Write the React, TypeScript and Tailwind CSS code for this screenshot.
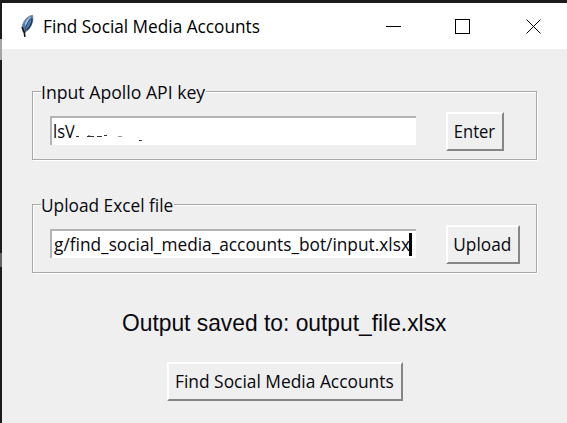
import React from "react";

const uiFont = "font-['Open_Sans','Noto_Sans',sans-serif]";

function Feather() {
  return (
    <svg className="h-6 w-4 shrink-0" viewBox="0 0 16 24" fill="none">
      <path d="M5.700 18.500C3.500 16 3.700 11 6.700 6.500C8.700 3.600 11.500 1.500 14.600 1.400C15.400 5.500 14.200 11 11 15C9.600 16.700 7.700 18 5.700 18.500Z" fill="#4a7ab6" stroke="#78838c" strokeWidth="1" />
      <path d="M7 9C8.500 5.500 11 2.800 13.100 2.600C12 5.500 9.800 8.500 7.200 12.500Z" fill="#9fbfe2" />
      <path d="M14.100 4.500C14.100 9 12.300 12.700 9 15.800" stroke="#243447" strokeWidth="1.300" />
      <path d="M12.300 4.500C9.600 8.500 7.300 13 6.800 19" stroke="#2b3b4f" strokeWidth="0.800" />
      <path d="M4.100 13L6.300 18.500L6.900 22.800" stroke="#161616" strokeWidth="1.600" />
    </svg>
  );
}

function TitleBar() {
  return (
    <header className="flex h-[46px] shrink-0 items-center bg-white pl-4 text-black">
      <Feather />
      <h1 className="ml-[9px] grow whitespace-nowrap text-[18px] leading-6">
        <span className="inline-block origin-left scale-x-[0.957]">Find Social Media Accounts</span>
      </h1>
      <svg className="h-4 w-[155px] shrink-0" viewBox="0 0 155 16" fill="none" stroke="#000" shapeRendering="crispEdges">
        <path d="M0 8.500H15" />
        <path d="M69.500 1.500H83.500V15.500H69.500Z" />
        <path d="M140.500 1.500L154.500 15.500M154.500 1.500L140.500 15.500" shapeRendering="auto" />
      </svg>
      <div className="w-[26px] shrink-0" />
    </header>
  );
}

function TkButton({ children, className, textClass }: { children: React.ReactNode; className: string; textClass: string }) {
  return (
    <button
      className={`flex h-[39px] shrink-0 items-center justify-center whitespace-nowrap border-2 border-t-white border-l-white border-r-[#858585] border-b-[#858585] bg-[#efefef] pr-[2px] ${className}`}
    >
      <span className={`-mt-px inline-block leading-6 ${textClass}`}>{children}</span>
    </button>
  );
}

function Group({ legend, boxClass, legendClass, children }: { legend: string; boxClass: string; legendClass: string; children: React.ReactNode }) {
  return (
    <section className="flex h-[69px] w-[505px] flex-col border border-[#a8a8a8] shadow-[1px_1px_0_#fff,inset_1px_1px_0_#fff]">
      <div className={`-mt-[12px] ml-2 h-6 self-start whitespace-nowrap bg-[#efefef] leading-6 ${boxClass}`}>
        <span className={`inline-block origin-left ${legendClass}`}>{legend}</span>
      </div>
      <div className="flex h-[45px] items-start pl-[17px]">{children}</div>
    </section>
  );
}

function Entry({ children }: { children: React.ReactNode }) {
  return (
    <div className="mt-[12px] mr-[30px] flex h-[29px] w-[366px] shrink-0 items-center overflow-hidden whitespace-nowrap border-t-2 border-l-2 border-[#b4b4b4] bg-white pb-px leading-6">
      {children}
    </div>
  );
}

export default function App() {
  return (
    <div className={`flex h-[423px] w-[567px] overflow-hidden bg-[#1c1c1e] pt-[3px] text-[18px] text-[#08080e] ${uiFont}`}>
      <div className="flex w-[2px] shrink-0 flex-col">
        <div className="mt-9 h-[21px] bg-[#a5a5a5]" />
        <div className="mt-[193px] h-[14px] bg-[#5f6468]" />
      </div>
      <main className="flex grow flex-col bg-[#efefef]">
        <TitleBar />
        <div className="flex grow flex-col pl-[30px] pt-[42px]">
          <Group legend="Input Apollo API key" boxClass="w-[165px]" legendClass="scale-x-[0.98]">
            <Entry>
              <span className="w-[22px] pl-[1px]">
                <span className="inline-block origin-left scale-x-[0.92]">lsV</span>
              </span>
              <svg className="relative h-6 w-[90px]" viewBox="0 0 90 24">
                <path d="M0 0H8V24H2Z" fill="#fff" />
                <path d="M2 17.500h3M13 17.500h7M23 17.500h5M30 16.500h3" stroke="#333" />
                <path d="M14 16.500h2M44 17.500h4" stroke="#999" />
                <path d="M65 21.500h3" stroke="#333" />
              </svg>
            </Entry>
            <TkButton className="mt-2 w-[58px]" textClass="scale-x-[0.92]">Enter</TkButton>
          </Group>
          <div className="h-[44px] shrink-0" />
          <Group legend="Upload Excel file" boxClass="w-[133px]" legendClass="scale-x-[0.96]">
            <Entry>
              <span className="w-[357px] shrink-0 pl-[2px]">
                <span className="inline-block origin-left scale-x-[0.96]">g/find_social_media_accounts_bot/input.xlsx</span>
              </span>
              <i className="h-[23px] w-[3px] shrink-0 bg-black" />
            </Entry>
            <TkButton className="mt-2 w-[74px]" textClass="scale-x-[0.96]">Upload</TkButton>
          </Group>
          <p className="mt-[34px] ml-[90px] h-8 whitespace-nowrap font-['Liberation_Sans',Arial,sans-serif] text-[24px] leading-8">
            <span className="inline-block origin-left scale-x-[0.95]">Output saved to: output_file.xlsx</span>
          </p>
          <TkButton className="mt-[23px] ml-[135px] w-[236px]" textClass="scale-x-[0.965]">Find Social Media Accounts</TkButton>
        </div>
      </main>
    </div>
  );
}
